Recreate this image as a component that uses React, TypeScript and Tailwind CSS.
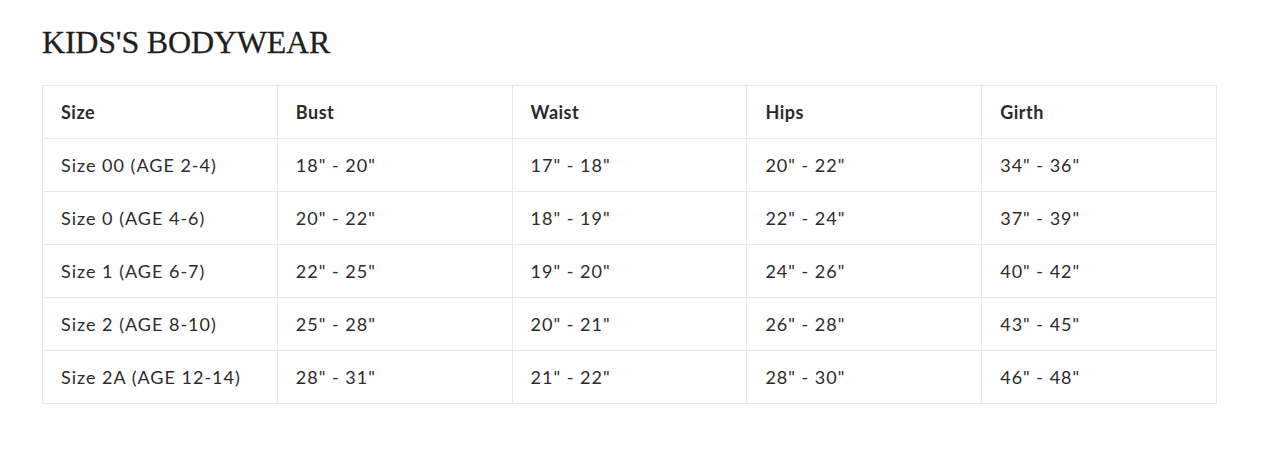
import React from 'react';

const headers = ['Size', 'Bust', 'Waist', 'Hips', 'Girth'];

const rows = [
  ['Size 00 (AGE 2-4)', '18" - 20"', '17" - 18"', '20" - 22"', '34" - 36"'],
  ['Size 0 (AGE 4-6)', '20" - 22"', '18" - 19"', '22" - 24"', '37" - 39"'],
  ['Size 1 (AGE 6-7)', '22" - 25"', '19" - 20"', '24" - 26"', '40" - 42"'],
  ['Size 2 (AGE 8-10)', '25" - 28"', '20" - 21"', '26" - 28"', '43" - 45"'],
  ['Size 2A (AGE 12-14)', '28" - 31"', '21" - 22"', '28" - 30"', '46" - 48"'],
];

export default function App() {
  return (
    <div className="w-[1282px] h-[458px] bg-white pl-[42px] pt-[24px]">
      <h2 className="font-['Liberation_Serif',serif] text-[32px] leading-[36px] text-[#1f1f1f] tracking-[-0.2px] [-webkit-text-stroke:0.3px_#1f1f1f]">
        KIDS'S BODYWEAR
      </h2>
      <table className="mt-[25px] w-[1175px] table-fixed border-collapse border border-[#e9e9e4] font-['Lato',sans-serif] text-[18px] text-[#2b2b2b]">
        <thead>
          <tr className="h-[53px]">
            {headers.map((h) => (
              <th key={h} className="border border-[#e9e9e4] px-[18px] text-left font-bold tracking-[0.5px]">
                {h}
              </th>
            ))}
          </tr>
        </thead>
        <tbody>
          {rows.map((r) => (
            <tr key={r[0]} className="h-[53px]">
              {r.map((c, i) => (
                <td key={i} className="border border-[#e9e9e4] px-[18px] tracking-[1px]">
                  {c}
                </td>
              ))}
            </tr>
          ))}
        </tbody>
      </table>
    </div>
  );
}
